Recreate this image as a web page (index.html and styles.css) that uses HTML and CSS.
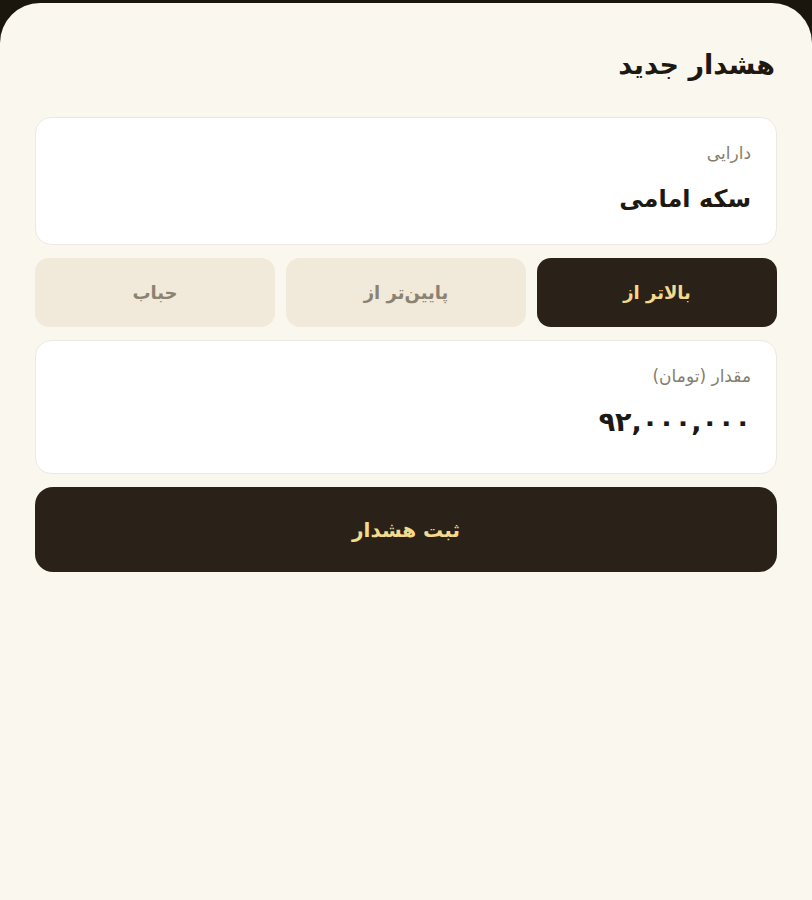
FILE: index.html
```html
<!DOCTYPE html>
<html lang="fa" dir="rtl">
<head>
  <meta charset="UTF-8">
  <meta name="viewport" content="width=device-width, initial-scale=1.0">
  <title>هشدار جدید</title>
  <link rel="stylesheet" href="styles.css">
</head>
<body>
  <div class="sheet">
    <h1>هشدار جدید</h1>

    <div class="field">
      <div class="field-label">دارایی</div>
      <div class="field-value">سکه امامی</div>
    </div>

    <div class="modes">
      <button type="button" class="mode active">بالاتر از</button>
      <button type="button" class="mode">پایین‌تر از</button>
      <button type="button" class="mode">حباب</button>
    </div>

    <div class="field field-amount">
      <div class="field-label">مقدار (تومان)</div>
      <div class="field-value amount">۹۲,۰۰۰,۰۰۰</div>
    </div>

    <button type="submit" class="submit">ثبت هشدار</button>
  </div>
</body>
</html>
```

FILE: styles.css
```css
html, body {
  margin: 0;
  height: 100%;
}

body {
  background: #1a150d;
  font-family: 'DejaVu Sans', 'Noto Sans', sans-serif;
  padding-top: 3px;
  box-sizing: border-box;
}

.sheet {
  background: #faf8ee;
  border-radius: 40px 40px 0 0;
  min-height: 897px;
  padding: 40px 35px 0;
  box-sizing: border-box;
  display: flex;
  flex-direction: column;
  gap: 13px;
}

h1 {
  margin: 0 0 17px;
  font-size: 27px;
  font-weight: 700;
  color: #1d1912;
  line-height: 44px;
  padding-right: 2px;
}

.field {
  background: #fff;
  border: 1px solid #ede9de;
  border-radius: 16px;
  height: 128px;
  box-sizing: border-box;
  padding: 21px 25px 0;
}

.field-amount {
  height: 134px;
}

.field-label {
  font-size: 17px;
  color: #857d6c;
  line-height: 28px;
}

.field-value {
  margin-top: 14px;
  font-size: 24px;
  font-weight: 700;
  color: #1d1912;
  line-height: 36px;
}

.amount {
  font-size: 27px;
  letter-spacing: 1px;
}

.modes {
  display: flex;
  gap: 11px;
}

.mode {
  flex: 1;
  height: 69px;
  border: none;
  border-radius: 14px;
  background: #f1e9da;
  color: #8c8271;
  font-family: inherit;
  font-size: 18px;
  font-weight: 700;
  cursor: pointer;
}

.mode.active {
  background: #2a2218;
  color: #f3da8c;
}

.submit {
  height: 85px;
  border: none;
  border-radius: 18px;
  background: #2a2218;
  color: #f3da8c;
  font-family: inherit;
  font-size: 20px;
  font-weight: 700;
  cursor: pointer;
}
```
